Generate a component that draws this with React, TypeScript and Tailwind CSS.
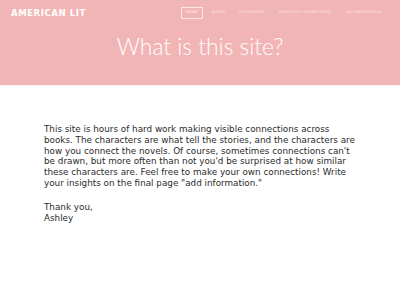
export default function App() {
  const nav = ["Books", "Characters", "Character Connections", "Add Information"];
  return (
    <div className="h-[300px] w-[400px] overflow-hidden bg-white font-['Liberation_Sans',sans-serif]">
      <header className="h-[85px] bg-[#f2b5b5]">
        <div className="flex items-start justify-between pl-[11px] pr-[18px] pt-[7px]">
          <div className="pt-[1px] text-[8.6px] font-bold uppercase leading-[10px] tracking-[0.06em] text-white font-['DejaVu_Sans',sans-serif]">
            American Lit
          </div>
          <nav className="flex items-center gap-[14px] text-[3.5px] uppercase leading-none tracking-[0.06em] text-white/70 font-['DejaVu_Sans',sans-serif]">
            <span className="-mr-[5px] border border-white/70 px-[4px] py-[3px] text-white/80">Home</span>
            {nav.map((n) => (
              <span key={n}>{n}</span>
            ))}
          </nav>
        </div>
        <h1 className="mt-[12px] text-center text-[22.8px] font-light leading-[30px] text-white font-['Lato',sans-serif]">
          What is this site?
        </h1>
      </header>
      <div className="h-[1px] bg-[#fbeeee]" />
      <main className="pl-[44px] pt-[38px] text-[8.8px] leading-[10.8px] text-[#2b2b2b] font-['DejaVu_Sans',sans-serif]">
        <p className="whitespace-nowrap">
          This site is hours of hard work making visible connections across
          <br />
          books. The characters are what tell the stories, and the characters are
          <br />
          how you connect the novels. Of course, sometimes connections can't
          <br />
          be drawn, but more often than not you'd be surprised at how similar
          <br />
          these characters are. Feel free to make your own connections! Write
          <br />
          your insights on the final page "add information."
        </p>
        <p className="mt-[13px] whitespace-nowrap leading-[11.3px]">
          Thank you,
          <br />
          Ashley
        </p>
      </main>
    </div>
  );
}
